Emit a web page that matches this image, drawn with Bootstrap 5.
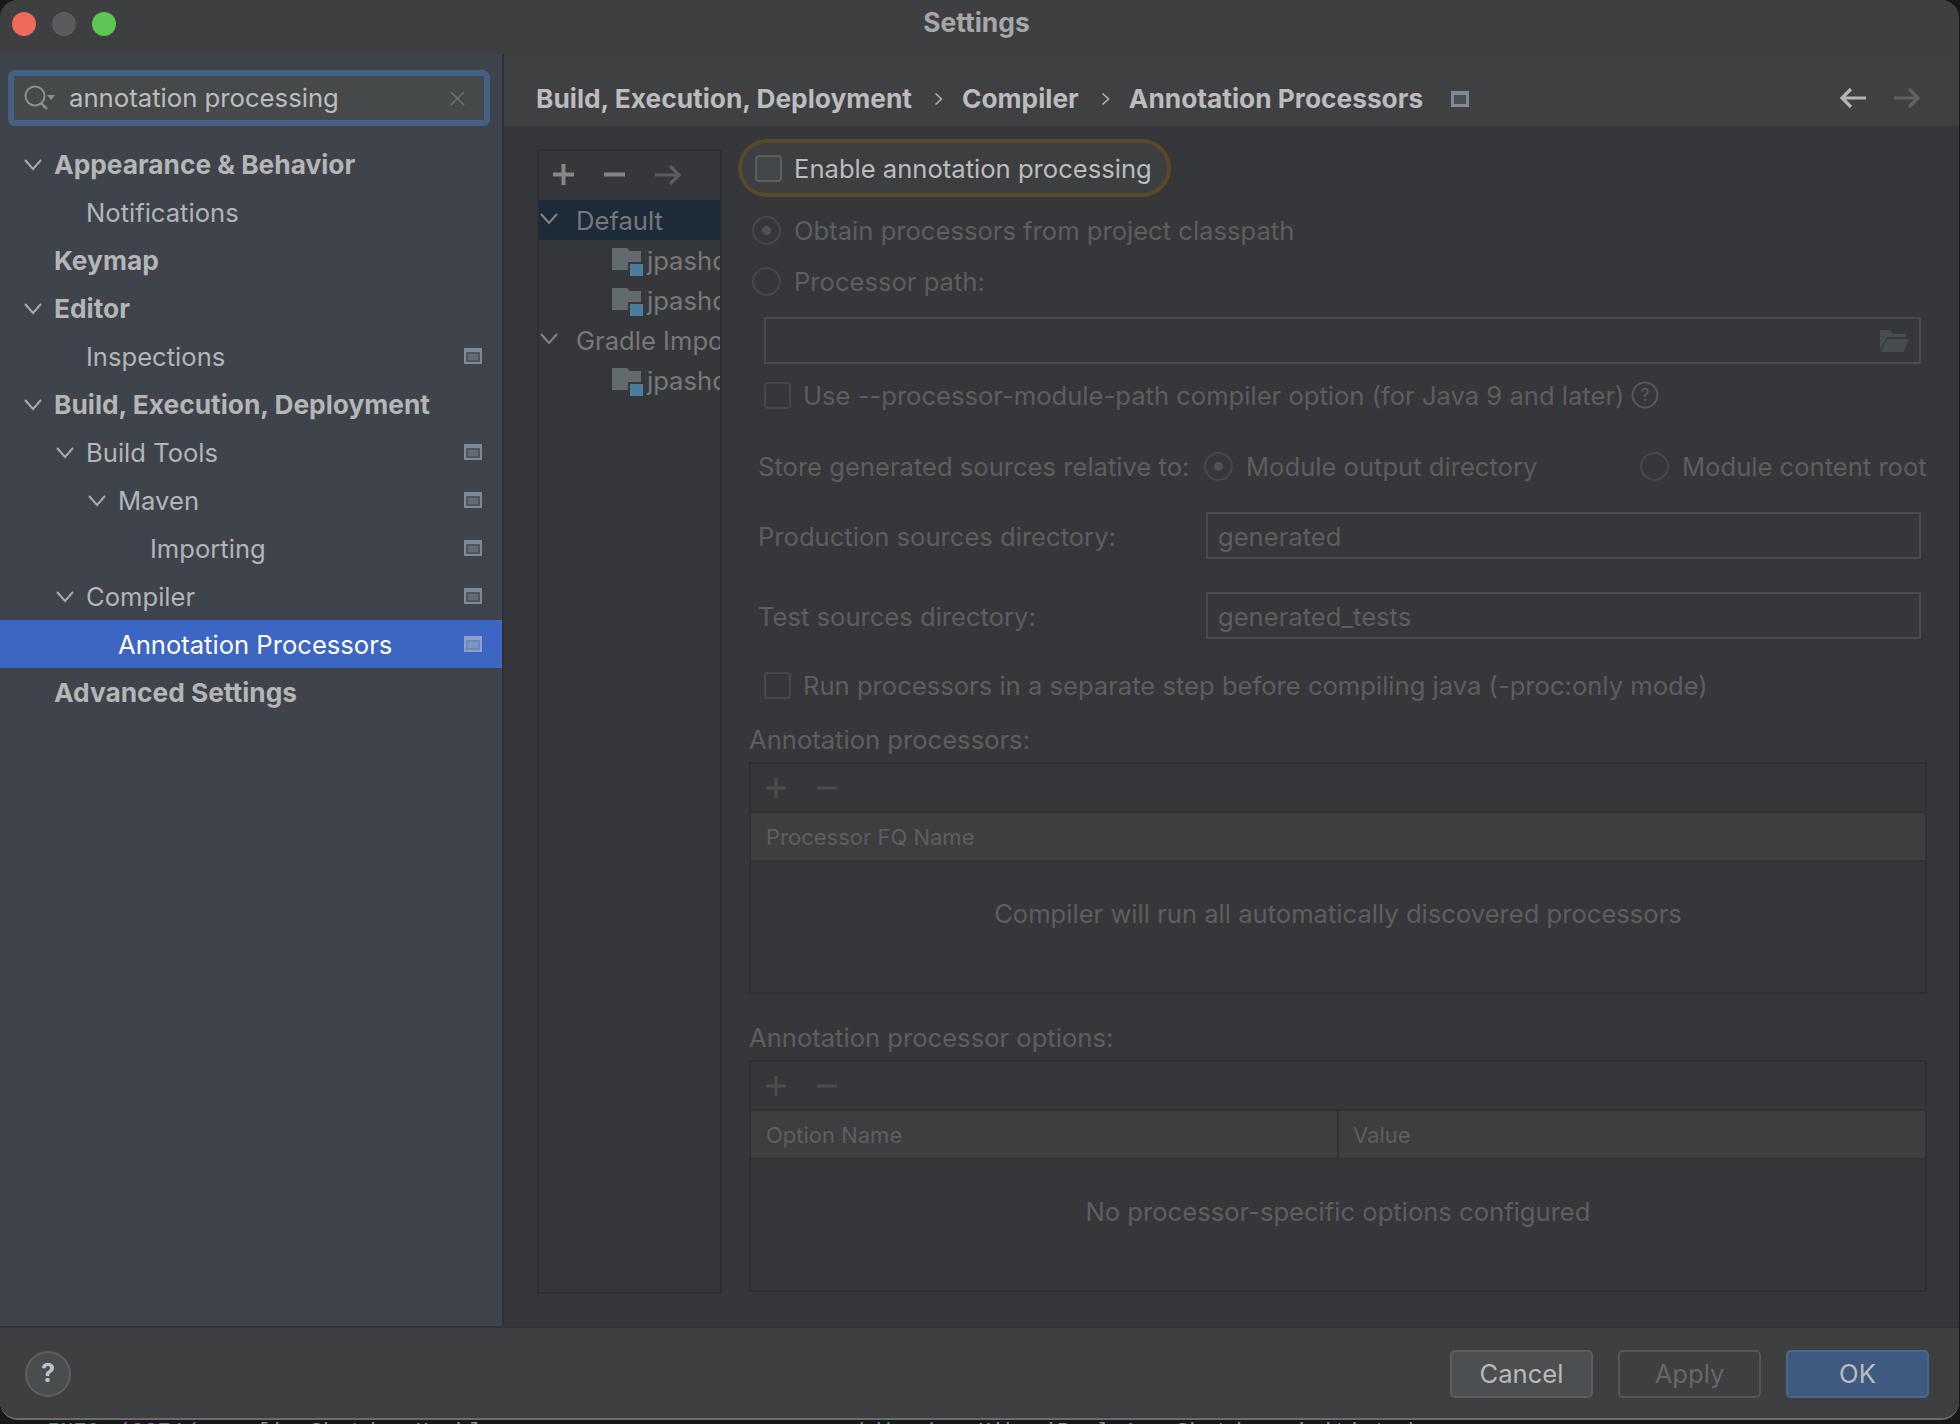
<!DOCTYPE html>
<html lang="en">
<head>
<meta charset="UTF-8" />
<title>Settings</title>
<link href="https://cdn.jsdelivr.net/npm/bootstrap@5.3.0/dist/css/bootstrap.min.css" rel="stylesheet" />
<style>
  html, body { height: 100%; }
  body { background: #17181a; font-family: Inter, "Liberation Sans", sans-serif; font-size: 25.6px; color: #b4b5b6; overflow: hidden; }
  .win { height: 1420px; width: 1959px; background: #3d3e40; border-radius: 18px; border-bottom: 2px solid #6a6b6d; overflow: hidden; }
  .term { height: 4px; overflow: hidden; font: 22px/26px "Liberation Mono", monospace; color: #8a8a8a; white-space: pre; padding-left: 47px; }
  .term-g { color: #5f8a4a; }
  .term-p { color: #8a62a8; margin-left: 18px; }
  .term-w { margin-left: 60px; }
  .term-t { color: #3f8f8f; margin-left: 232px; }
  .term-m { margin-left: 40px; }
  .titlebar { height: 54px; background: #3e3f41; position: relative; padding-right: 6px; }
  .titlebar-name { font-size: 26.4px; font-weight: 700; color: #a7a7a7; line-height: 45px; }
  .dot { width: 24px; height: 24px; border-radius: 50%; }
  .dots { padding: 12px 0 0 12px; gap: 16px; position: absolute; left: 0; top: 0; }
  .side { width: 504px; background: #3e434c; border-right: 2px solid #2f3032; flex: none; }
  .search { margin: 16px 12px 0 8px; height: 56px; background: #45494a; border: 5px solid #466083; box-shadow: inset 0 0 0 1px #3f6494; border-radius: 7px; padding: 0 20px 0 11px; gap: 13px; color: #bdbdbd; font-size: 25.7px; }
  .tree-list { padding-top: 14px; }
  .trow { height: 48px; line-height: 50px; position: relative; white-space: nowrap; }
  .trow-bold { font-weight: 700; font-size: 26.3px; color: #b5b5b5; }
  .trow-sel { background: #3d65c4; color: #fff; }
  .ind0 { padding-left: 54px; }
  .ind1 { padding-left: 86px; }
  .ind2 { padding-left: 118px; }
  .ind3 { padding-left: 150px; }
  .chev { position: absolute; top: 19px; width: 20px; height: 12px; }
  .page-ic { position: absolute; right: 20px; top: 16px; width: 18px; height: 16px; }
  .crumbs { height: 72px; background: #3f4042; padding: 18px 38px 0 32px; font-weight: 700; color: #bcbcbc; font-size: 26.3px; white-space: nowrap; }
  .crumb-sep { width: 9px; height: 14px; margin: 0 19px 0 22px; }
  .crumb-ic { margin-left: 28px; }
  .nav-arrows { gap: 28px; margin-top: -2px; }
  .body-area { height: 1200px; background: #36373a; padding: 23px 0 0 33px; }
  .leftpanel { width: 185px; height: 1145px; border: 2px solid #2f3032; flex: none; overflow: hidden; color: #777879; }
  .lp-tools { height: 49px; gap: 30px; padding: 0 0 2px 14px; }
  .lp-row { height: 40px; line-height: 41px; white-space: nowrap; position: relative; overflow: hidden; }
  .lp-sel { background: #1c2b37; }
  .lp-folder { position: absolute; left: 73px; top: 8px; }
  .lp-name { padding-left: 108px; }
  .lp-top { padding-left: 37px; }
  .lp-chev { position: absolute; left: 1px; top: 13px; }
  .form-col { padding-left: 16px; width: 1205px; flex: none; color: #5d5e60; white-space: nowrap; }
  .form-txt { padding-top: 3px; }
  .enable { width: 433px; height: 58px; margin-top: -10px; border: 4px solid #59492a; border-radius: 29px; background: #3d3e40; padding-left: 13px; gap: 12px; color: #bcbcbc; }
  .cb { width: 27px; height: 27px; background: #43474a; border: 2px solid #5b5e61; border-radius: 4px; flex: none; }
  .cb-off { background: transparent; border-color: #47484a; }
  .rad { width: 29px; height: 29px; border-radius: 50%; border: 2px solid #47484a; flex: none; }
  .rad-on { background: radial-gradient(circle, #515254 0 4px, transparent 5px); }
  .frow { height: 50px; padding-left: 14px; gap: 13px; }
  .frow-cb { padding-left: 26px; gap: 12px; }
  .tf { height: 47px; border: 2px solid #4a4b4d; padding: 3px 10px 0; }
  .path-tf { margin: 11px 6px 0 26px; padding-top: 0; }
  .store { height: 50px; margin-top: 21px; }
  .store-lbl { width: 466px; padding-left: 20px; flex: none; }
  .store-opt { margin-left: 13px; }
  .store-w { width: 394px; flex: none; }
  .lbl-row { padding-right: 6px; }
  .lbl-w { width: 468px; padding-left: 20px; flex: none; }
  .tbl { margin-left: 11px; margin-top: 7px; width: 1178px; height: 232px; border: 2px solid #2f3032; }
  .tbl-tools { height: 49px; gap: 31px; padding-left: 15px; border-bottom: 2px solid #2f3032; }
  .tbl-head { height: 49px; background: #3d3e40; border-bottom: 2px solid #323335; font-size: 22px; padding: 2px 0 0 15px; }
  .tbl-head-split { padding: 0; }
  .tbl-col { width: 588px; height: 100%; border-right: 2px solid #323335; padding: 2px 0 0 15px; }
  .tbl-val { padding: 2px 0 0 14px; }
  .tbl-empty { flex: 1; padding-bottom: 26px; }
  .sect { margin-left: 11px; line-height: 34px; height: 32px; }
  .foot { height: 92px; background: #3e3f41; border-top: 2px solid #313234; padding: 22px 30px 0 25px; }
  .help { width: 46px; height: 46px; margin-top: 1px; border-radius: 50%; background: #4a4d4f; border: 2px solid #5c5e60; font-weight: 700; color: #c2c2c2; font-size: 25px; }
  .act { width: 143px; height: 48px; border-radius: 5px; border: 2px solid #5b5d5f; background: #4c4f51; color: #b9b9b9; font-size: 25.6px; padding: 0; }
  .act:disabled { opacity: 1; background: #3e3f41; color: #666769; border-color: #55565a; }
  .act-ok, .act-ok:hover { background: #3f5a80; border-color: #4a6788; color: #bcbcbc; }
</style>
</head>
<body>
<div class="win d-flex flex-column">
  <div class="titlebar text-center flex-none">
    <div class="dots d-flex">
      <div class="dot" style="background:#f1685d"></div>
      <div class="dot" style="background:#5a5b5d"></div>
      <div class="dot" style="background:#5ec653"></div>
    </div>
    <span class="titlebar-name">Settings</span>
  </div>
  <div class="d-flex flex-grow-1" style="min-height:0">
    <div class="side">
      <div class="search d-flex align-items-center">
        <svg width="32" height="26" viewBox="0 0 32 26" class="flex-none"><circle cx="11" cy="11" r="9.5" fill="none" stroke="#8c8e90" stroke-width="2"/><path d="M17 18l6 6" stroke="#8c8e90" stroke-width="2.5"/><path d="M23 10h8l-4 5z" fill="#8c8e90"/></svg>
        <span class="flex-grow-1">annotation processing</span>
        <svg width="15" height="15" viewBox="0 0 16 16"><path d="M1 1l14 14M15 1L1 15" stroke="#707274" stroke-width="1.6"/></svg>
      </div>
      <div class="tree-list" id="tree"></div>
    </div>
    <div class="flex-grow-1 d-flex flex-column" style="min-width:0">
      <div class="crumbs d-flex align-items-center">
        <span>Build, Execution, Deployment</span>
        <svg class="crumb-sep" viewBox="0 0 9 14"><path d="M1.5 1.5l6 5.5-6 5.5" fill="none" stroke="#b0b0b0" stroke-width="1.6"/></svg>
        <span>Compiler</span>
        <svg class="crumb-sep" viewBox="0 0 9 14"><path d="M1.5 1.5l6 5.5-6 5.5" fill="none" stroke="#b0b0b0" stroke-width="1.6"/></svg>
        <span>Annotation Processors</span>
        <svg class="crumb-ic" width="18" height="16" viewBox="0 0 18 16"><rect width="18" height="16" fill="#7f8894"/><rect x="3" y="4" width="12" height="9" fill="#4a4f57"/></svg>
        <div class="ms-auto d-flex nav-arrows">
          <svg width="27" height="24" viewBox="0 0 27 24"><path d="M27 12H3M12 3l-9 9 9 9" fill="none" stroke="#b4b4b4" stroke-width="3.2"/></svg>
          <svg width="27" height="24" viewBox="0 0 27 24"><path d="M0 12h24M15 3l9 9-9 9" fill="none" stroke="#606163" stroke-width="3.2"/></svg>
        </div>
      </div>
      <div class="body-area d-flex">
        <div class="leftpanel">
          <div class="lp-tools d-flex align-items-center">
            <svg width="21" height="21" viewBox="0 0 21 21"><path d="M10.5 0v21M0 10.5h21" stroke="#858687" stroke-width="4"/></svg>
            <svg width="21" height="21" viewBox="0 0 21 21"><path d="M0 10.5h21" stroke="#858687" stroke-width="4"/></svg>
            <svg width="27" height="24" viewBox="0 0 27 24"><path d="M0 12h24M15 3l9 9-9 9" fill="none" stroke="#5b5c5e" stroke-width="3.2"/></svg>
          </div>
          <div class="lp-row lp-sel lp-top"><svg class="lp-chev" width="18" height="12" viewBox="0 0 18 12"><path d="M1 1l8 9 8-9" fill="none" stroke="#838486" stroke-width="2"/></svg>Default</div>
          <div class="lp-row lp-name"><svg class="lp-folder" width="31" height="28" viewBox="0 0 31 28"><use href="#modfolder"/></svg>jpashop</div>
          <div class="lp-row lp-name"><svg class="lp-folder" width="31" height="28" viewBox="0 0 31 28"><use href="#modfolder"/></svg>jpashop</div>
          <div class="lp-row lp-top"><svg class="lp-chev" width="18" height="12" viewBox="0 0 18 12"><path d="M1 1l8 9 8-9" fill="none" stroke="#838486" stroke-width="2"/></svg>Gradle Imported</div>
          <div class="lp-row lp-name"><svg class="lp-folder" width="31" height="28" viewBox="0 0 31 28"><use href="#modfolder"/></svg>jpashop</div>
        </div>
        <div class="form-col">
          <div class="enable d-flex align-items-center"><span class="cb"></span><span class="form-txt">Enable annotation processing</span></div>
          <div class="frow d-flex align-items-center mt-2"><span class="rad rad-on"></span><span class="form-txt">Obtain processors from project classpath</span></div>
          <div class="frow d-flex align-items-center" style="margin-top:1px"><span class="rad"></span><span class="form-txt">Processor path:</span></div>
          <div class="tf path-tf d-flex align-items-center justify-content-end">
            <svg width="30" height="22" viewBox="0 0 30 22"><path d="M1 0h10l3 4h13v3H8L1 20z" fill="#474c50"/><path d="M8 9h22l-5 13H2z" fill="#474c50"/></svg>
          </div>
          <div class="frow frow-cb d-flex align-items-center" style="margin-top:6px"><span class="cb cb-off"></span><span class="form-txt">Use --processor-module-path compiler option (for Java 9 and later)</span>
            <svg width="28" height="28" viewBox="0 0 28 28" style="margin-left:-5px"><circle cx="14" cy="14" r="12.5" fill="none" stroke="#55585b" stroke-width="2"/><text x="14" y="20" text-anchor="middle" font-size="17" fill="#5d5e60" font-family="Inter, sans-serif">?</text></svg>
          </div>
          <div class="store d-flex align-items-center">
            <span class="store-lbl form-txt">Store generated sources relative to:</span>
            <span class="rad rad-on"></span><span class="store-opt store-w form-txt">Module output directory</span>
            <span class="rad"></span><span class="store-opt form-txt">Module content root</span>
          </div>
          <div class="lbl-row d-flex align-items-center" style="margin-top:21px">
            <span class="lbl-w form-txt">Production sources directory:</span>
            <div class="tf d-flex align-items-center flex-grow-1">generated</div>
          </div>
          <div class="lbl-row d-flex align-items-center" style="margin-top:33px">
            <span class="lbl-w form-txt">Test sources directory:</span>
            <div class="tf d-flex align-items-center flex-grow-1">generated_tests</div>
          </div>
          <div class="frow frow-cb d-flex align-items-center" style="margin-top:21px"><span class="cb cb-off"></span><span class="form-txt">Run processors in a separate step before compiling java (-proc:only mode)</span></div>
          <div class="sect" style="margin-top:13px">Annotation processors:</div>
          <div class="tbl d-flex flex-column">
            <div class="tbl-tools d-flex align-items-center">
              <svg width="20" height="20" viewBox="0 0 20 20"><path d="M10 0v20M0 10h20" stroke="#4c4d4f" stroke-width="3"/></svg>
              <svg width="20" height="20" viewBox="0 0 20 20"><path d="M0 10h20" stroke="#4c4d4f" stroke-width="3"/></svg>
            </div>
            <div class="tbl-head d-flex align-items-center">Processor FQ Name</div>
            <div class="tbl-empty d-flex align-items-center justify-content-center">Compiler will run all automatically discovered processors</div>
          </div>
          <div class="sect" style="margin-top:27px">Annotation processor options:</div>
          <div class="tbl d-flex flex-column">
            <div class="tbl-tools d-flex align-items-center">
              <svg width="20" height="20" viewBox="0 0 20 20"><path d="M10 0v20M0 10h20" stroke="#4c4d4f" stroke-width="3"/></svg>
              <svg width="20" height="20" viewBox="0 0 20 20"><path d="M0 10h20" stroke="#4c4d4f" stroke-width="3"/></svg>
            </div>
            <div class="tbl-head tbl-head-split d-flex align-items-center">
              <div class="tbl-col d-flex align-items-center">Option Name</div>
              <div class="tbl-val">Value</div>
            </div>
            <div class="tbl-empty d-flex align-items-center justify-content-center">No processor-specific options configured</div>
          </div>
        </div>
      </div>
    </div>
  </div>
  <div class="foot d-flex align-items-start">
    <div class="help d-flex align-items-center justify-content-center">?</div>
    <div class="ms-auto d-flex" style="gap:25px">
      <button type="button" class="btn act">Cancel</button>
      <button type="button" class="btn act" disabled>Apply</button>
      <button type="button" class="btn act act-ok">OK</button>
    </div>
  </div>
</div>
<div class="term"><span class="term-g">INFO</span><span class="term-p">(8874/</span><span class="term-w">[ionShutdownHook]</span><span class="term-t">com.zaxxer.hikari</span><span class="term-m">HikariPool-1 - Shutdown initiated...</span></div>

<svg width="0" height="0" class="position-absolute">
  <symbol id="modfolder" viewBox="0 0 31 28">
    <path d="M0 0h15l3 3h11v19H0z" fill="#626a6e"/>
    <rect x="16" y="14" width="15" height="14" fill="#36373a"/>
    <rect x="18" y="16" width="13" height="12" fill="#4a7d9c"/>
  </symbol>
</svg>

<script src="https://cdn.jsdelivr.net/npm/bootstrap@5.3.0/dist/js/bootstrap.bundle.min.js"></script>
<script>
  // settings tree: [label, indent, bold, has chevron, has page icon, selected]
  const rows = [
    ["Appearance & Behavior", 0, true, true, false],
    ["Notifications", 1, false, false, false],
    ["Keymap", 0, true, false, false],
    ["Editor", 0, true, true, false],
    ["Inspections", 1, false, false, true],
    ["Build, Execution, Deployment", 0, true, true, false],
    ["Build Tools", 1, false, true, true],
    ["Maven", 2, false, true, true],
    ["Importing", 3, false, false, true],
    ["Compiler", 1, false, true, true],
    ["Annotation Processors", 2, false, false, true, true],
    ["Advanced Settings", 0, true, false, false],
  ];
  const tree = document.querySelector("#tree");
  rows.forEach(([label, ind, bold, chev, page, sel]) => {
    const row = document.createElement("div");
    row.className = "trow ind" + ind + (bold ? " trow-bold" : "") + (sel ? " trow-sel" : "");
    let html = "";
    if (chev) {
      html += `<svg class="chev" style="left:${ind * 32 + 23}px" viewBox="0 0 20 12"><path d="M2 1l8 9 8-9" fill="none" stroke="#a9abad" stroke-width="2"/></svg>`;
    }
    html += label.replace("&", "&amp;");
    if (page) {
      html += `<svg class="page-ic" viewBox="0 0 18 16"><rect width="18" height="16" fill="${sel ? "#8d9fc6" : "#7f8894"}"/><rect x="2" y="4" width="14" height="10" fill="${sel ? "#6c87c6" : "#4f545d"}"/><rect x="4" y="6" width="10" height="6" fill="${sel ? "#8094c0" : "#646b75"}"/></svg>`;
    }
    row.innerHTML = html;
    tree.appendChild(row);
  });
</script>
</body>
</html>
